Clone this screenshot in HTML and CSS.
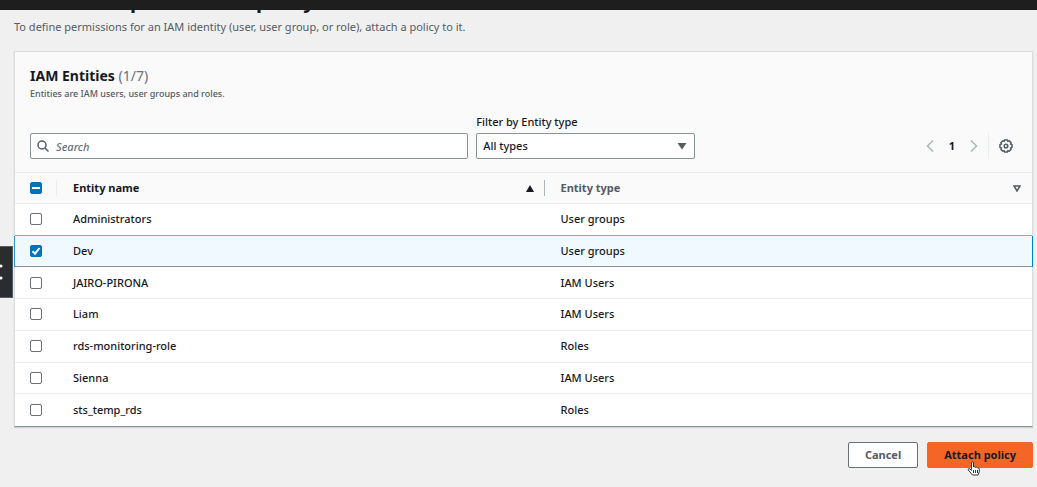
FILE: index.html
```html
<!DOCTYPE html>
<html lang="en">
<head>
<meta charset="utf-8">
<title>Attach as a permissions policy</title>
<link rel="stylesheet" href="styles.css">
</head>
<body>
<div class="topbar"></div>
<button class="side-tab" type="button" aria-label="Open navigation">
  <svg width="3" height="18" viewBox="0 0 3 18"><path d="M-2 .5 1 3-2 5.500zM-2 12.500 1 15l-3 2.500z"/><circle cx="1" cy="3" r="1.500"/><circle cx="1" cy="15" r="1.500"/></svg>
</button>
<main class="page">
  <h1 class="title">Attach as a permissions policy</h1>
  <p class="intro">To define permissions for an IAM identity (user, user group, or role), attach a policy to it.</p>
  <section class="panel">
    <header class="panel-head">
      <h2 class="panel-title">IAM Entities <span class="count">(1/7)</span></h2>
      <p class="panel-sub">Entities are IAM users, user groups and roles.</p>
      <div class="tools">
        <div class="search">
          <svg class="search-icon" width="12" height="12" viewBox="0 0 12 12"><circle cx="5" cy="5" r="4"/><path d="M8 8l3.500 3.500"/></svg>
          <input class="field search-input" type="text" placeholder="Search" aria-label="Search">
        </div>
        <div class="filter">
          <label class="filter-label" for="type">Filter by Entity type</label>
          <div class="select-wrap">
            <select class="field select" id="type"><option>All types</option></select>
            <svg class="select-arrow" width="10" height="8" viewBox="0 0 10 8"><path d="M.5 1h9L5 7.500z"/></svg>
          </div>
        </div>
        <nav class="pager" aria-label="Pages">
          <button class="icon-btn" type="button" aria-label="Previous page"><svg class="chevron" width="8" height="12" viewBox="0 0 8 12"><path d="M7 .5 1.500 6 7 11.500"/></svg></button>
          <button class="page-no" type="button">1</button>
          <button class="icon-btn" type="button" aria-label="Next page"><svg class="chevron" width="8" height="12" viewBox="0 0 8 12"><path d="M1 .5 6.500 6 1 11.500"/></svg></button>
          <span class="rule"></span>
          <button class="icon-btn" type="button" aria-label="Preferences"><svg class="gear" width="14" height="14" viewBox="0 0 14 14"><path d="M5.600 1h2.800l.5 1.400 1.400-.5 1.800 1.800-.5 1.400 1.400.5v2.800l-1.400.5.5 1.400-1.800 1.800-1.400-.5-.5 1.400H5.600l-.5-1.400-1.400.5-1.800-1.800.5-1.400L1 8.400V5.600l1.400-.5-.5-1.400 1.800-1.800 1.400.5z"/><circle cx="7" cy="7" r="1.800"/></svg></button>
        </nav>
      </div>
    </header>
    <table class="table">
      <colgroup><col class="col-check"><col><col></colgroup>
      <thead>
        <tr>
          <th class="check-cell"><input class="check some" type="checkbox" aria-label="Select all"></th>
          <th class="name-head"><div class="th">Entity name<svg width="8" height="7" viewBox="0 0 8 7"><path d="M0 7 4 0l4 7z" fill="#16191f"/></svg></div></th>
          <th class="muted"><div class="th">Entity type<svg width="8" height="7" viewBox="0 0 8 7"><path d="M1 1h6L4 6z" fill="none" stroke="#545b64" stroke-width="1.500"/></svg></div></th>
        </tr>
      </thead>
      <tbody>
        <tr><td><input class="check" type="checkbox" id="r1"></td><td><label for="r1">Administrators</label></td><td>User groups</td></tr>
        <tr class="selected"><td><span class="check-wrap"><input class="check" type="checkbox" id="r2" checked><svg class="tick" width="12" height="12" viewBox="0 0 12 12"><path d="M2.500 6.200 5 8.700 9.500 3"/></svg></span></td><td><label for="r2">Dev</label></td><td>User groups</td></tr>
        <tr><td><input class="check" type="checkbox" id="r3"></td><td><label for="r3">JAIRO-PIRONA</label></td><td>IAM Users</td></tr>
        <tr><td><input class="check" type="checkbox" id="r4"></td><td><label for="r4">Liam</label></td><td>IAM Users</td></tr>
        <tr><td><input class="check" type="checkbox" id="r5"></td><td><label for="r5">rds-monitoring-role</label></td><td>Roles</td></tr>
        <tr><td><input class="check" type="checkbox" id="r6"></td><td><label for="r6">Sienna</label></td><td>IAM Users</td></tr>
        <tr><td><input class="check" type="checkbox" id="r7"></td><td><label for="r7">sts_temp_rds</label></td><td>Roles</td></tr>
      </tbody>
    </table>
  </section>
  <div class="actions">
    <button class="btn" type="button">Cancel</button>
    <button class="btn primary" type="button">Attach policy
      <svg class="pointer" width="14" height="15" viewBox="0 0 14 15"><path d="M4.500 8.500V2q0-1.200 1-1.200t1 1.200v4q1.200-.8 2 .3 1.300-.6 2 .5 1.800-.2 1.800 1.400v2.300l-1.200 3.500H5.500L1.300 9q-.5-1 .5-1.300 1-.2 2.700 1.600z" fill="#fff" stroke="#333"/><path d="M6.500 9v3M8.500 9v3M10.500 9v3" stroke="#333" fill="none"/></svg>
    </button>
  </div>
</main>
</body>
</html>
```
FILE: styles.css
```css
* { box-sizing: border-box; }
body {
  margin: 0;
  background: #f0f0f0;
  color: #16191f;
  font: 500 11px/16px "Noto Sans", "Open Sans", sans-serif;
}
button, input, select { font: inherit; color: inherit; }
h1, h2, p { margin: 0; }
svg { display: block; flex: none; }

.topbar { position: sticky; top: 0; z-index: 2; height: 10px; background: #1e1e1e; }
.side-tab {
  position: absolute; left: 0; top: 246px; width: 13px; height: 52px;
  padding: 0; border: 1px solid #545b64; border-left: 0; background: #2a2c2f;
}
.side-tab svg { fill: #fff; }

.page { padding: 0 4px 16px 14px; }
.title { margin-top: -21px; font-size: 20px; line-height: 24px; font-weight: 700; }
.intro { color: #545b64; font-weight: 400; margin: 6px 0 16px; }

.panel {
  background: #fff;
  border: 1px solid #d9dcdc;
  border-bottom-color: #879596;
  box-shadow: 0 1px 1px #ccd0d0;
}
.panel-head { padding: 14px 15px 13px; background: #fafafa; border-bottom: 1px solid #eaeded; }
.panel-title { font-size: 14px; line-height: 20px; font-weight: 700; }
.count { font-weight: 400; color: #687078; }
.panel-sub { font-size: 9px; line-height: 16px; color: #545b64; }

.tools { display: grid; grid-template-columns: 44.4% 22.2% 1fr; gap: 8px; align-items: end; padding-top: 12px; }
.search { position: relative; }
.search-icon { position: absolute; left: 7px; top: 7px; fill: none; stroke: #545b64; stroke-width: 1.5; }
.field { display: block; width: 100%; height: 26px; border: 1px solid #879596; border-radius: 2px; background: #fff; }
.search-input { padding: 0 8px 0 25px; }
.search-input::placeholder { color: #687078; font-style: italic; opacity: 1; }
.filter-label { display: block; padding-bottom: 3px; }
.select-wrap { position: relative; }
.select { appearance: none; padding: 0 24px 0 6px; }
.select-arrow { position: absolute; right: 8px; top: 9px; fill: #545b64; pointer-events: none; }

.pager { display: flex; justify-content: flex-end; align-items: center; height: 26px; padding-right: 4px; }
.icon-btn, .page-no { display: flex; padding: 0; border: 0; background: none; }
.page-no { margin: 0 15px; font-weight: 700; }
.chevron { fill: none; stroke: #aab7b8; stroke-width: 1.5; }
.rule { width: 1px; height: 26px; margin: 0 10px; background: #eaeded; }
.gear { fill: none; stroke: #545b64; stroke-width: 1.5; }

.table { width: 100%; height: 253px; table-layout: fixed; border-collapse: separate; border-spacing: 0; }
.col-check { width: 42px; }
th, td { padding: 0 16px; height: 31px; text-align: left; border-bottom: 1px solid #eaeded; }
th { background: #fafafa; font-weight: 700; }
th:first-child, td:first-child { padding: 0 0 0 15px; }
th:last-child { padding-right: 11px; }
tbody tr:last-child td { border-bottom: 0; }
.th { display: flex; align-items: center; justify-content: space-between; }
.muted { color: #545b64; }
.check-cell { background: linear-gradient(#eaeded, #eaeded) right center / 1px 16px no-repeat #fafafa; }
.name-head { padding-right: 11px; background: linear-gradient(#aab7b8, #aab7b8) right center / 1px 16px no-repeat #fafafa; }

.selected td { background: #eff9ff; border-bottom-color: #879596; box-shadow: 0 -1px #4dbfe6; }
.selected td:first-child { box-shadow: 0 -1px #4dbfe6, -1px 0 #2b9bd6; }
.selected td:last-child { box-shadow: 0 -1px #4dbfe6, 1px 0 #0080c8; }

.check {
  appearance: none; display: block; width: 12px; height: 12px; margin: 0;
  border: 1px solid #687078; border-radius: 2px; background: #fff;
}
.check.some, .check:checked { display: grid; place-items: center; border-color: #0073bb; background: #0073bb; }
.some::before { content: ""; width: 8px; height: 2px; background: #fff; }
.check-wrap { position: relative; display: block; width: 12px; }
.tick { position: absolute; inset: 0; display: none; fill: none; stroke: #fff; stroke-width: 2; pointer-events: none; }
.check:checked + .tick { display: block; }

.actions { display: flex; justify-content: flex-end; gap: 9px; padding-top: 15px; }
.btn {
  position: relative; height: 26px; padding: 0 16px;
  border: 1px solid #687078; border-radius: 2px;
  background: #fff; color: #545b64; font-weight: 700;
}
.primary { border-color: #f56626; background: #f56626; color: #16191f; }
.pointer { position: absolute; left: 39px; top: 18px; }
```
